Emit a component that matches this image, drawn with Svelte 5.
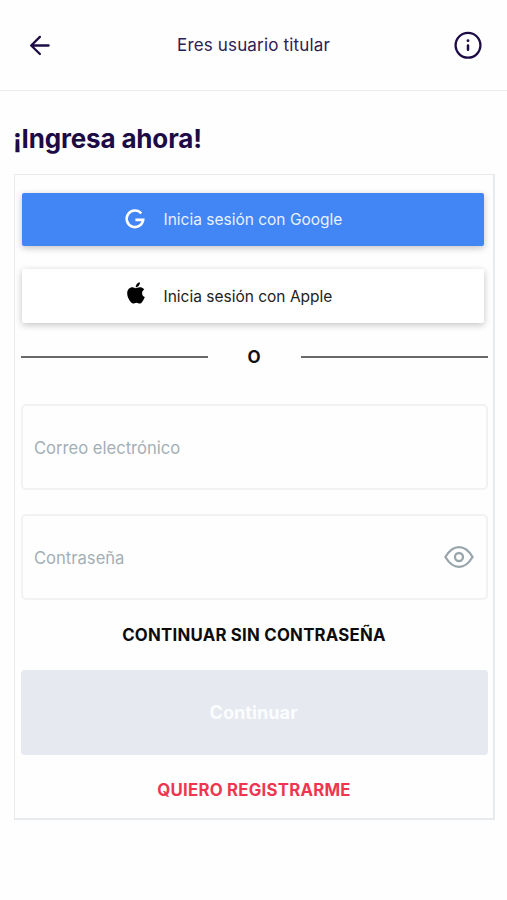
<script>
  let email = $state('');
  let password = $state('');
  let visible = $state(false);
</script>

<div class="screen">
  <header>
    <button class="icon-btn" aria-label="Volver">
      <svg width="22" height="22" viewBox="0 0 22 22" fill="none" stroke="#1c0b45" stroke-width="2.3" stroke-linecap="round" stroke-linejoin="round">
        <path d="M19.600 11.500H2.200M10.900 2.900 2.200 11.500l8.700 8.500" />
      </svg>
    </button>
    <span class="heading">Eres usuario titular</span>
    <button class="icon-btn" aria-label="Información">
      <svg width="28" height="28" viewBox="0 0 28 28" fill="none">
        <circle cx="14" cy="14.3" r="12.400" stroke="#1c0b45" stroke-width="2.3" />
        <path d="M14 14.500v4.300" stroke="#1c0b45" stroke-width="2.500" stroke-linecap="round" />
        <circle cx="14" cy="9.700" r="1.400" fill="#1c0b45" />
      </svg>
    </button>
  </header>

  <h1>¡Ingresa ahora!</h1>

  <main class="card">
    <button class="social google">
      <svg width="20" height="20" viewBox="0 0 20 20" fill="none" stroke="#fff" stroke-width="2.600">
        <path d="M16.300 3.400A8.300 8.300 0 1 0 18.200 9.900H10.400" />
      </svg>
      <span>Inicia sesión con Google</span>
    </button>
    <button class="social apple">
      <svg width="18" height="22" viewBox="0 0 18 22" fill="#000">
        <path d="M12.900.3c.1 1.300-.4 2.500-1.100 3.400-.8.900-2 1.600-3.100 1.500-.1-1.200.5-2.400 1.100-3.200C10.600 1.100 11.900.4 12.900.3Z" />
        <path d="M17.300 7.600c-1.500.9-2.200 2-2.200 3.600 0 1.900 1.100 3.300 2.700 3.900-.5 1.500-1.300 3-2.300 4.300-.8 1.100-1.600 2.100-2.900 2.100-1.200 0-1.700-.8-3.200-.8s-2 .8-3.200.8c-1.300 0-2.200-1.100-3.100-2.300C1.700 17.300.2 14.500.2 11.600c0-4.100 2.600-6.300 5.200-6.300 1.400 0 2.600.9 3.400.9.800 0 2.200-1 3.900-1 .6 0 3 .1 4.600 2.400Z" />
      </svg>
      <span>Inicia sesión con Apple</span>
    </button>

    <div class="divider"><i></i><b>O</b><i></i></div>

    <div class="field">
      <input type="email" placeholder="Correo electrónico" bind:value={email} />
    </div>
    <div class="field">
      <input type={visible ? 'text' : 'password'} placeholder="Contraseña" bind:value={password} />
      <button class="icon-btn" aria-label="Mostrar contraseña" onclick={() => (visible = !visible)}>
        <svg width="30" height="24" viewBox="0 0 30 24" fill="none" stroke="#98a5ad" stroke-width="2.300" stroke-linejoin="round">
          <path d="M1.400 12C5.500 5.100 9.700 2.100 15 2.100S24.500 5.100 28.600 12C24.500 18.900 20.300 21.900 15 21.900S5.500 18.900 1.400 12Z" />
          <circle cx="15" cy="12" r="4" />
        </svg>
      </button>
    </div>

    <button class="link dark">CONTINUAR SIN CONTRASEÑA</button>
    <button class="submit" disabled>Continuar</button>
    <button class="link red">QUIERO REGISTRARME</button>
  </main>
</div>

<style>
  :global(body) {
    background: #fefefe;
  }
  .screen {
    box-sizing: border-box;
    min-height: 900px;
    font-family: Inter, 'Liberation Sans', sans-serif;
    color: #1c0b45;
  }
  button {
    padding: 0;
    border: 0;
    background: none;
    font: inherit;
    color: inherit;
  }
  svg {
    display: block;
    flex: none;
    overflow: visible;
  }
  header {
    box-sizing: border-box;
    height: 91px;
    padding: 0 25px 0 29px;
    display: flex;
    align-items: center;
    justify-content: space-between;
    border-bottom: 1px solid #e9ebed;
  }
  .heading {
    margin-left: 2px;
    font-size: 17px;
    letter-spacing: 0.16px;
    color: #2e2053;
  }
  h1 {
    margin: 31px 0 0 13px;
    font-size: 26px;
    line-height: 33px;
    font-weight: 700;
    letter-spacing: -0.17px;
  }
  .card {
    box-sizing: border-box;
    width: 481px;
    height: 646px;
    margin: 19px 0 0 14px;
    padding: 18px 5px 0 6px;
    border: 1px solid #e8ebed;
    border-right-width: 2px;
    border-bottom-width: 2px;
    display: flex;
    flex-direction: column;
  }
  .social {
    flex: none;
    display: flex;
    align-items: center;
    width: 462.5px;
    height: 53px;
    margin-left: 0.5px;
    border-radius: 2px;
    font-size: 15.5px;
    box-shadow: 0 2px 7px rgba(0, 0, 0, 0.24);
  }
  .google {
    padding-left: 103px;
    gap: 19px;
    background: #4285f4;
    color: #e9f1ff;
  }
  .apple {
    height: 54px;
    margin-top: 23px;
    padding-left: 105px;
    gap: 19px;
    background: #fff;
    color: #222;
  }
  .apple svg {
    margin-bottom: 6px;
  }
  .divider {
    display: flex;
    align-items: center;
    justify-content: space-between;
    height: 24px;
    margin-top: 22px;
  }
  .divider i {
    width: 187px;
    height: 2px;
    background: #69696b;
  }
  .divider b {
    margin-left: -1px;
    font-size: 17px;
    line-height: 24px;
    font-weight: 700;
    color: #111;
  }
  .field {
    box-sizing: border-box;
    flex: none;
    display: flex;
    align-items: center;
    height: 86px;
    margin-top: 24px;
    padding: 0 12px 0 11px;
    border: 2px solid #f0f2f4;
    border-radius: 5px;
  }
  .divider + .field {
    margin-top: 35px;
  }
  input {
    flex: 1;
    min-width: 0;
    padding: 1px 0 0;
    border: 0;
    outline: 0;
    background: none;
    font: inherit;
    font-size: 16.6px;
  }
  input::placeholder {
    color: #a3afb5;
    opacity: 1;
  }
  .link {
    height: 24px;
    margin-right: 1px;
    font-size: 16.8px;
    line-height: 23px;
    font-weight: 650;
    letter-spacing: 0.24px;
    text-align: center;
  }
  .dark {
    margin-top: 23px;
    color: #0c0c0c;
  }
  .submit {
    flex: none;
    height: 85px;
    margin-top: 23px;
    padding: 0 2px 2px 0;
    border-radius: 4px;
    background: #e6e9f0;
    color: #fbfcfd;
    font-size: 18.2px;
    font-weight: 700;
  }
  .red {
    margin-top: 23px;
    color: #ee3650;
  }
</style>
